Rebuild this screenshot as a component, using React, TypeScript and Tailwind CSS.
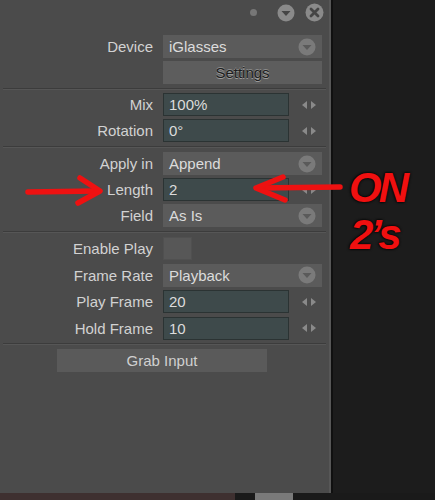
import React from "react";

const font = { fontFamily: '"Liberation Sans", Arial, sans-serif' };

function DropIcon({ bg = "#7a7a7a", tri = "#5a5a5a", size = 18 }: { bg?: string; tri?: string; size?: number }) {
  return (
    <svg width={size} height={size} viewBox="0 0 18 18">
      <circle cx="9" cy="9" r="8.5" fill={bg} />
      <path d="M4.5 7 L13.5 7 L9 12 Z" fill={tri} />
    </svg>
  );
}

function Arrows() {
  return (
    <svg width="16" height="10" viewBox="0 0 16 10">
      <path d="M1 5 L6 1 L6 9 Z" fill="#8a8a8a" />
      <path d="M15 5 L10 1 L10 9 Z" fill="#8a8a8a" />
    </svg>
  );
}

function Label({ children }: { children: React.ReactNode }) {
  return (
    <div className="w-[153px] shrink-0 text-right text-[15px] text-[#d2d2d2] leading-none">{children}</div>
  );
}

function Dropdown({ label, value }: { label: string; value: string }) {
  return (
    <div className="flex items-center h-[23px]">
      <Label>{label}</Label>
      <div className="ml-[10px] w-[159px] h-[23px] bg-[#5b5b5b] flex items-center justify-between pl-[6px] pr-[6px]">
        <span className="text-[15px] text-[#dcdcdc] leading-none">{value}</span>
        <DropIcon />
      </div>
    </div>
  );
}

function Input({ label, value }: { label: string; value: string }) {
  return (
    <div className="flex items-center h-[23px]">
      <Label>{label}</Label>
      <div className="ml-[10px] w-[126px] h-[23px] bg-[#3e4a4b] border border-[#2b3333] flex items-center pl-[5px]">
        <span className="text-[15px] text-[#dcdcdc] leading-none">{value}</span>
      </div>
      <div className="ml-[12px] flex items-center">
        <Arrows />
      </div>
    </div>
  );
}

function Sep() {
  return (
    <div className="my-[3.5px] mx-[3px]">
      <div className="h-px bg-[#3c3c3c]" />
      <div className="h-px bg-[#565656]" />
    </div>
  );
}

function SepWide() {
  return (
    <div className="my-[4px] mx-[3px]">
      <div className="h-px bg-[#3c3c3c]" />
      <div className="h-px bg-[#565656]" />
    </div>
  );
}

export default function App() {
  return (
    <div className="relative w-[435px] h-[500px] bg-[#1c1c1c] overflow-hidden" style={font}>
      <div className="flex h-[493px]">
        <div className="w-[331px] h-full bg-[#4b4b4b] border-r-2 border-[#575757] flex flex-col">
          {/* title bar */}
          <div className="h-[25px] flex items-center justify-end pr-[5px]">
            <div className="w-[7px] h-[7px] rounded-full bg-[#777777] mr-[20px]" />
            <div className="mr-[10px] flex">
              <DropIcon bg="#8a8a8a" tri="#454545" size={18} />
            </div>
            <svg width="19" height="19" viewBox="0 0 19 19">
              <circle cx="9.5" cy="9.5" r="9" fill="#8a8a8a" />
              <path d="M6 6 L13 13 M13 6 L6 13" stroke="#454545" strokeWidth="2.8" strokeLinecap="round" />
            </svg>
          </div>
          <div className="pt-[10px] flex flex-col gap-[3px]">
            <Dropdown label="Device" value="iGlasses" />
            <div className="flex h-[23px]">
              <div className="w-[153px]" />
              <div className="ml-[10px] w-[159px] h-[23px] bg-[#5d5d5d] flex items-center justify-center">
                <span className="text-[15px] text-[#1e1e1e] leading-none" style={{ textShadow: "0 1px 0 #9a9a9a, 0 -1px 0 #8a8a8a" }}>Settings</span>
              </div>
            </div>
          </div>
          <Sep />
          <div className="flex flex-col gap-[3px]">
            <Input label="Mix" value="100%" />
            <Input label="Rotation" value="0°" />
          </div>
          <SepWide />
          <div className="flex flex-col gap-[3px]">
            <Dropdown label="Apply in" value="Append" />
            <Input label="Length" value="2" />
            <Dropdown label="Field" value="As Is" />
          </div>
          <SepWide />
          <div className="flex flex-col gap-[3.67px]">
            <div className="flex items-center h-[23px]">
              <Label>Enable Play</Label>
              <div className="ml-[10px] w-[29px] h-[23px] bg-[#575757] border border-[#505050]" />
            </div>
            <Dropdown label="Frame Rate" value="Playback" />
            <Input label="Play Frame" value="20" />
            <Input label="Hold Frame" value="10" />
          </div>
          <Sep />
          <div className="pl-[57px]">
            <div className="w-[210px] h-[23px] bg-[#5a5a5a] flex items-center justify-center">
              <span className="text-[15px] text-[#d0d0d0] leading-none">Grab Input</span>
            </div>
          </div>
        </div>
        <div className="w-[2px] h-full bg-[#101010]" />
        <div className="flex-1" />
      </div>
      {/* bottom strip */}
      <div className="flex h-[7px]">
        <div className="w-[235px] bg-[#3e3030]" />
        <div className="w-[20px] bg-[#1a1a1a]" />
        <div className="w-[38px] bg-[#7a7a7a]" />
        <div className="flex-1 bg-[#1a1a1a]" />
      </div>

      {/* annotations */}
      <svg className="absolute left-0 top-0 pointer-events-none" width="435" height="500" viewBox="0 0 435 500">
        <g stroke="#ee1111" strokeWidth="5.5" strokeLinecap="round" strokeLinejoin="round" fill="none">
          <path d="M28 192 L97 191" />
          <path d="M80 178 L100 191 L78 203" />
          <path d="M340 187 L258 188" />
          <path d="M283 177 L256 188 L285 200" />
        </g>
      </svg>
      <div
        className="absolute left-[349px] top-[167px] text-[42px] font-bold italic text-[#f01010] leading-none tracking-[-3px]"
        style={{ ...font, textShadow: "0 0 3px #000, 0 0 2px #000" }}
      >
        ON
      </div>
      <div
        className="absolute left-[350px] top-[214px] text-[42px] font-bold italic text-[#f01010] leading-none tracking-[-3px]"
        style={{ ...font, textShadow: "0 0 3px #000, 0 0 2px #000" }}
      >
        2’s
      </div>
    </div>
  );
}
